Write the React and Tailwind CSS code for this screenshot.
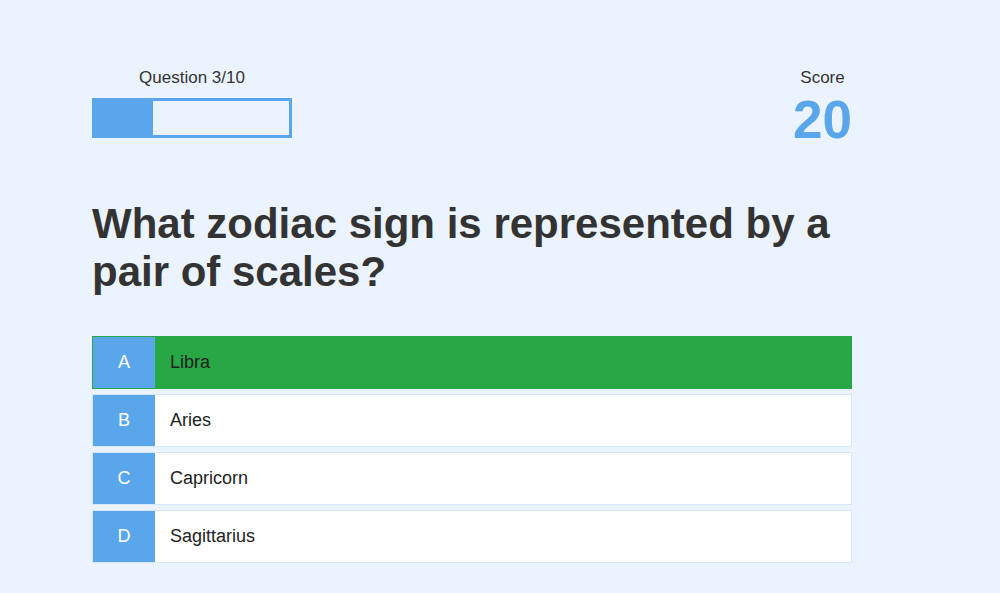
import React from 'react';

const options = [
  { letter: 'A', text: 'Libra', correct: true },
  { letter: 'B', text: 'Aries' },
  { letter: 'C', text: 'Capricorn' },
  { letter: 'D', text: 'Sagittarius' },
];

const App = () => {
  const current = 3;
  const total = 10;
  const score = 20;

  return (
    <div className="min-h-[593px] w-full bg-[#ebf3fe] font-['Liberation_Sans',Arial,sans-serif] text-[#333]">
      <div className="ml-[92px] w-[760px] pt-[68px]">
        {/* Header */}
        <div className="flex items-start justify-between">
          <div className="w-[200px]">
            <p className="text-center text-[17px] leading-[19px]">Question {current}/{total}</p>
            <div className="mt-[11px] h-[40px] w-[200px] border-[3px] border-[#59a7ea]">
              <div className="h-full bg-[#59a7ea]" style={{ width: `${(current / total) * 100}%` }} />
            </div>
          </div>
          <div className="text-center">
            <p className="text-[17px] leading-[19px]">Score</p>
            <p className="mt-[6px] text-[53px] font-bold leading-none text-[#59a7ea]">{score}</p>
          </div>
        </div>

        {/* Question */}
        <h1 className="mt-[54px] text-[42px] font-bold leading-[48px] text-[#333]">
          What zodiac sign is represented by a pair of scales?
        </h1>

        {/* Options */}
        <div className="mt-[40px] flex flex-col gap-[5px]">
          {options.map((opt) => (
            <div
              key={opt.letter}
              className={`flex h-[53px] border ${
                opt.correct ? 'border-[#28a745] bg-[#28a745]' : 'border-[#d5e7f8] bg-white'
              }`}
            >
              <div className="flex w-[62px] items-center justify-center bg-[#59a7ea] text-[18px] text-white">
                {opt.letter}
              </div>
              <div className="flex items-center pl-[15px] text-[18px] text-[#222]">{opt.text}</div>
            </div>
          ))}
        </div>
      </div>
    </div>
  );
};

export default App;
